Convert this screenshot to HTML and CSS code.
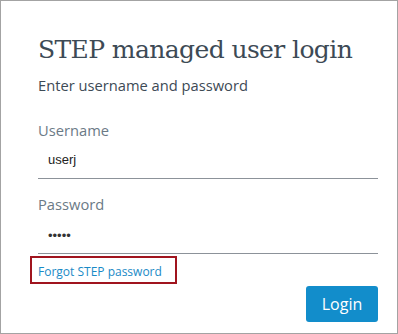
FILE: index.html
```html
<!DOCTYPE html>
<html>
<head>
    <title>STEP managed user login</title>
    <link rel="stylesheet" href="styles.css">
</head>
<body>
    <div class="login-box">
        <h1>STEP managed user login</h1>
        <p class="subtitle">Enter username and password</p>

        <form class="login-form">
            <div class="field">
                <label for="username">Username</label>
                <input type="text" id="username" value="userj">
            </div>
            <div class="field">
                <label for="password">Password</label>
                <input type="password" id="password" value="12345">
            </div>
            <div class="forgot">
                <a href="#">Forgot STEP password</a>
            </div>
            <div class="actions">
                <button type="submit">Login</button>
            </div>
        </form>
    </div>
</body>
</html>
```

FILE: styles.css
```css
html, body {
    margin: 0;
    padding: 0;
    background-color: #fff;
    font-family: 'Open Sans', 'Noto Sans', sans-serif;
    color: #3d4a55;
}

.login-box {
    width: 398px;
    height: 334px;
    box-sizing: border-box;
    border: 1px solid #a3a3a3;
    padding: 31px 19px 0 37px;
}

h1 {
    font-family: 'DejaVu Serif', 'Liberation Serif', serif;
    font-weight: normal;
    font-size: 25px;
    margin: 0;
    line-height: 36px;
    color: #3d4a55;
    letter-spacing: -0.6px;
}

.subtitle {
    font-size: 14.7px;
    margin: 7px 0 0;
    line-height: 20px;
}

.login-form {
    margin-top: 25px;
}

.field label {
    display: block;
    font-size: 14.7px;
    line-height: 20px;
    color: #6b7a86;
}

.field input {
    display: block;
    width: 100%;
    box-sizing: border-box;
    border: none;
    border-bottom: 1px solid #8c9299;
    padding: 0 10px;
    height: 39px;
    font-family: 'Liberation Sans', Arial, sans-serif;
    font-size: 13px;
    color: #222;
    outline: none;
}

.field + .field {
    margin-top: 15px;
}

#password {
    height: 40px;
    padding-top: 4px;
    color: #333;
}

.forgot {
    margin-top: 2px;
    margin-left: -8px;
    display: inline-block;
    border: 2px solid #a0141e;
    padding: 1px 13px 1px 6px;
}

.forgot a {
    font-size: 12px;
    line-height: 18px;
    color: #1a8ac6;
    text-decoration: none;
}

.actions {
    display: flex;
    justify-content: flex-end;
    margin-top: 2px;
}

button {
    width: 72px;
    height: 36px;
    border: none;
    border-radius: 3px;
    background-color: #128dcb;
    color: #fff;
    font-family: 'Open Sans', sans-serif;
    font-size: 16px;
    cursor: pointer;
}
```
